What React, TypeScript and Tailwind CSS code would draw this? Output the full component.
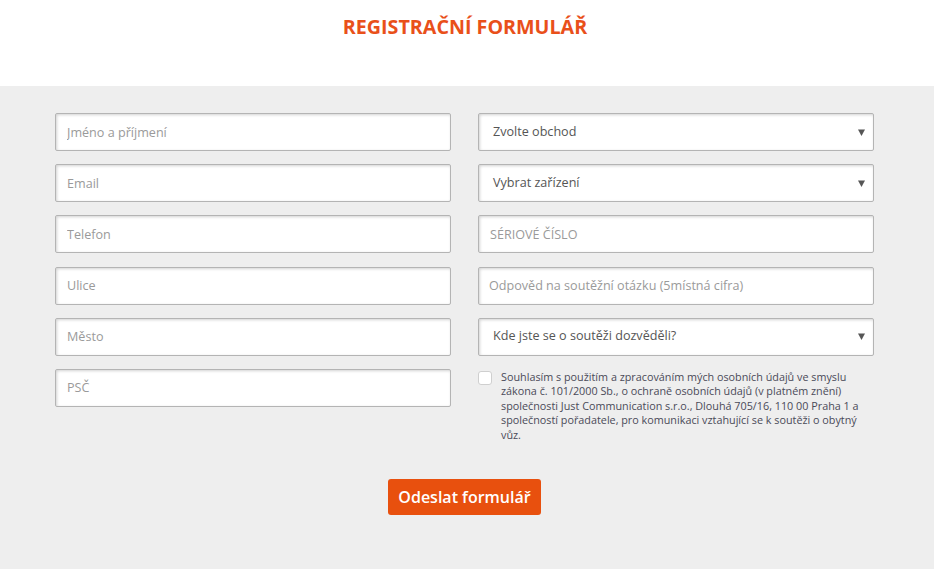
import { ReactNode } from "react";

const font = { fontFamily: '"Open Sans", "Liberation Sans", sans-serif' };

const boxClass =
  "h-[38px] w-full rounded-[2px] border border-[#b4b4b4] bg-white shadow-[inset_1px_1px_3px_rgba(0,0,0,0.18)] text-[12.6px] outline-none";

function TextField({ placeholder, left = 11 }: { placeholder: string; left?: number }) {
  return (
    <input
      type="text"
      placeholder={placeholder}
      className={`${boxClass} ${left === 11 ? "pl-[11px]" : "pl-[10px]"} placeholder:text-[#9a9a9a] text-[#555]`}
      style={font}
    />
  );
}

function SelectField({ children }: { children: ReactNode }) {
  return (
    <div className={`${boxClass} flex items-center justify-between pl-[14px] pr-[8px] text-[#555]`}>
      <span>{children}</span>
      <svg width="7" height="7" viewBox="0 0 7 7">
        <path d="M0 0.5 H7 L3.5 7 Z" fill="#555" />
      </svg>
    </div>
  );
}

export default function App() {
  const left = ["Jméno a příjmení", "Email", "Telefon", "Ulice", "Město", "PSČ"];

  return (
    <div className="min-h-[569px] w-full bg-[#eeeeee] flex flex-col" style={font}>
      <header className="h-[86px] bg-white flex justify-center pt-[13px] pr-[4px]">
        <h1 className="text-[19.7px] leading-[28px] font-bold text-[#e9501a]">
          REGISTRAČNÍ FORMULÁŘ
        </h1>
      </header>

      <main className="pl-[55px] pr-[60px] pt-[27px] pb-[53px] flex flex-col items-center">
        <div className="flex w-full gap-[27px]">
          <div className="flex w-[396px] flex-col gap-[13.2px]">
            {left.map((p) => (
              <TextField key={p} placeholder={p} />
            ))}
          </div>

          <div className="flex w-[396px] flex-col gap-[13.2px]">
            <SelectField>Zvolte obchod</SelectField>
            <SelectField>Vybrat zařízení</SelectField>
            <TextField placeholder="SÉRIOVÉ ČÍSLO" />
            <TextField placeholder="Odpověd na soutěžní otázku (5místná cifra)" left={10} />
            <SelectField>Kde jste se o soutěži dozvěděli?</SelectField>
            <label className="flex items-start gap-[9px] pt-[1px]">
              <span className="mt-[1px] h-[14px] w-[14px] shrink-0 rounded-[3px] border border-[#cfcfcf] bg-white" />
              <span className="w-[362px] text-[10.8px] leading-[14.5px] text-[#4a4a58]">
                Souhlasím s použitím a zpracováním mých osobních údajů ve smyslu zákona č. 101/2000
                Sb., o ochraně osobních údajů (v platném znění) společnosti Just Communication
                s.r.o., Dlouhá 705/16, 110 00 Praha 1 a společností pořadatele, pro komunikaci
                vztahující se k soutěži o obytný vůz.
              </span>
            </label>
          </div>
        </div>

        <button
          type="button"
          className="mt-[37px] h-[36px] w-[153px] rounded-[3px] bg-[#e8500e] text-[16px] font-semibold text-white"
        >
          Odeslat formulář
        </button>
      </main>
    </div>
  );
}
